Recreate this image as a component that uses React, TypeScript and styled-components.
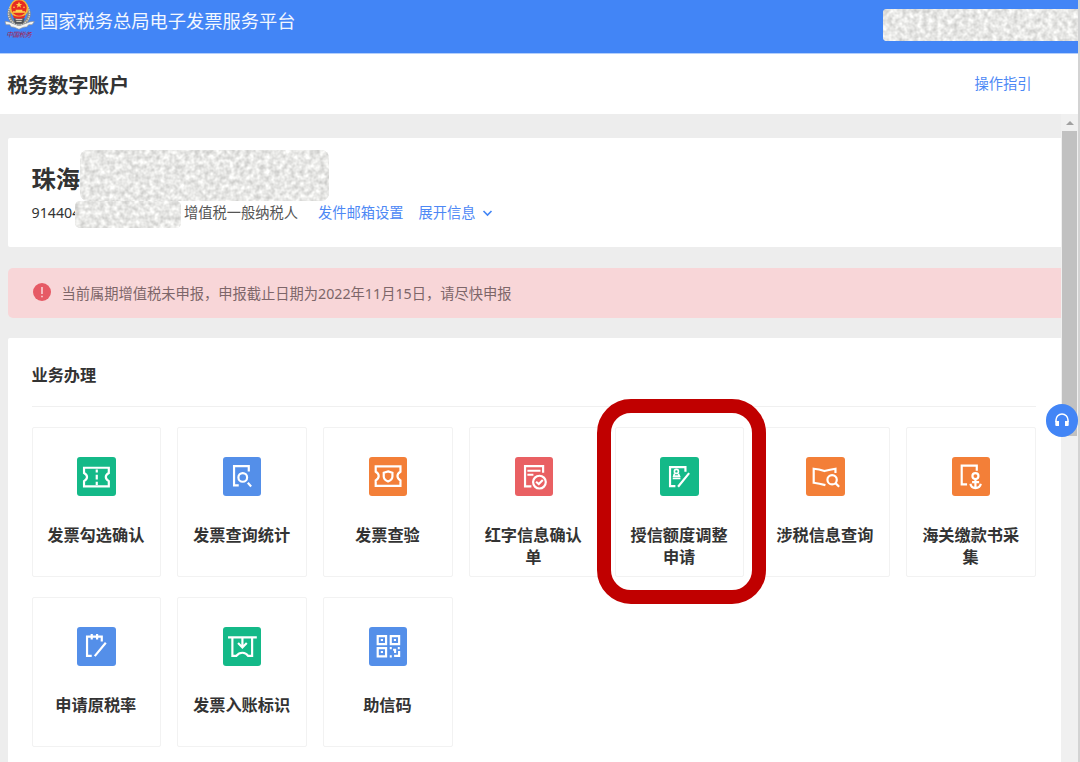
import React from 'react';
import styled, { createGlobalStyle } from 'styled-components';

const GlobalStyle = createGlobalStyle`
  * { box-sizing: border-box; }
  body {
    margin: 0;
    background: #ededed;
    color: #333;
    font-family: 'Noto Sans', 'Noto Sans CJK SC', sans-serif;
    font-size: 14.25px;
    overflow: hidden;
  }
`;

const Page = styled.div`
  display: flex;
  flex-direction: column;
  width: 1080px;
  height: 762px;
  overflow: hidden;
  border-right: 2px solid #d3d3d3;
`;

const Header = styled.header`
  display: flex;
  align-items: flex-start;
  flex: none;
  height: 54px;
  padding-left: 4px;
  background: #4285f6;
  border-bottom: 1px solid #b4cffb;
`;

const Brand = styled.h1`
  flex: 1;
  margin: 8px 0 0 4px;
  font-size: 18.25px;
  font-weight: 400;
  line-height: 26px;
  color: #f2f7ff;
  white-space: nowrap;
`;

const Redacted = styled.div<{ $w: number; $h: number; $radius: string }>`
  position: relative;
  flex: none;
  width: ${(p) => p.$w}px;
  height: ${(p) => p.$h}px;
  border-radius: ${(p) => p.$radius};
  overflow: hidden;
  background: #e8e8e6;
  svg { display: block; }
`;

const UserSlot = styled.div`
  margin: 9px -2px 0 0;
  position: relative;
`;

const TitleBar = styled.div`
  display: flex;
  justify-content: space-between;
  align-items: center;
  flex: none;
  height: 60px;
  padding: 0 46.5px 0 7.5px;
  background: #fff;
`;

const PageTitle = styled.h2`
  margin: 2px 0 0;
  font-size: 20.3px;
  line-height: 30px;
  font-weight: 700;
`;

const Link = styled.a`
  color: #4d88f5;
  line-height: 20px;
  white-space: nowrap;
`;

const Body = styled.div`
  display: flex;
  flex: 1;
  min-height: 0;
`;

const Content = styled.main`
  display: flex;
  flex-direction: column;
  width: 1061px;
  padding: 24.4px 0 0 7.5px;
  gap: 20.3px;
`;

const CompanyCard = styled.section`
  flex: none;
  height: 109px;
  padding: 11.4px 0 0 24px;
  background: #fff;
  border-radius: 2px 0 0 2px;
`;

const CompanyRow = styled.div`
  display: flex;
  height: 51px;
`;

const CompanyName = styled.strong`
  font-size: 24.3px;
  line-height: 36px;
  margin-top: 11px;
  width: 48.5px;
  white-space: nowrap;
`;

const TaxRow = styled.div`
  display: flex;
  height: 27px;
  line-height: 24px;
  white-space: nowrap;
`;

const TaxId = styled.span`
  width: 43.5px;
`;

const TaxType = styled.span`
  margin: 0 20px 0 3px;
  color: #555;
`;

const Expand = styled(Link)`
  display: flex;
  align-items: center;
  gap: 6px;
  height: 24px;
  margin-left: 15px;
  line-height: 24px;
`;

const RowLink = styled(Link)`
  line-height: 24px;
`;

const Alert = styled.section`
  display: flex;
  align-items: center;
  flex: none;
  gap: 11px;
  height: 50.5px;
  padding: 0 0 1px 25px;
  background: #f8d6d8;
  border-radius: 5px 0 0 5px;
  color: #7d6669;
  line-height: 20px;
  svg { margin-top: -1px; }
`;

const AlertText = styled.span`
  margin-top: 3px;
`;

const Panel = styled.section`
  flex: 1;
  padding: 0 25px 0 24px;
  background: #fff;
  border-radius: 2px 0 0 0;
`;

const PanelTitle = styled.h3`
  margin: 0;
  padding-top: 25px;
  height: 68.5px;
  font-size: 16.2px;
  line-height: 24px;
  border-bottom: 1px solid #f0f0f0;
`;

const Grid = styled.div`
  display: grid;
  grid-template-columns: repeat(7, 1fr);
  grid-auto-rows: 150px;
  gap: 20px 16.2px;
  margin-top: 20px;
`;

const Card = styled.div`
  position: relative;
  display: flex;
  flex-direction: column;
  align-items: center;
  padding: 29.4px 14px 0;
  border: 1px solid #f2f2f2;
  border-radius: 2px;
`;

const IconTile = styled.div<{ $color: string }>`
  width: 38.5px;
  height: 38.5px;
  border-radius: 3px;
  background: ${(p) => p.$color};
  svg { display: block; }
`;

const CardLabel = styled.div`
  margin-top: 28.1px;
  margin-left: -1px;
  font-size: 16.2px;
  font-weight: 700;
  line-height: 22.5px;
  text-align: center;
  white-space: pre;
`;

const Highlight = styled.div`
  position: absolute;
  z-index: 1;
  top: -29px;
  right: -22.5px;
  bottom: -28px;
  left: -19px;
  border: 14.5px solid #c00000;
  border-radius: 34px;
`;

const Scrollbar = styled.div`
  width: 17px;
  padding: 7px 1px 0;
  background: #f0f0f0;
`;

const ScrollArrow = styled.div`
  width: 0;
  margin: 0 auto 6px;
  border: 4px solid transparent;
  border-top-width: 0;
  border-bottom: 4px solid #a0a0a0;
`;

const ScrollThumb = styled.div`
  height: 305px;
  background: #c1c1c1;
`;

const Support = styled.button`
  position: absolute;
  z-index: 2;
  top: 404px;
  left: 1045.5px;
  display: flex;
  align-items: center;
  justify-content: center;
  width: 32.5px;
  height: 32.5px;
  padding: 0;
  border: 0;
  border-radius: 50%;
  background: #4285f6;
`;

const GREEN = '#14b988';
const BLUE = '#548fe9';
const ORANGE = '#f37f38';
const RED = '#e96063';

const Noise = ({ id, w, h, seed }: { id: string; w: number; h: number; seed: number }) => (
  <svg width={w} height={h}>
    <filter id={id} x="0" y="0" width="100%" height="100%" colorInterpolationFilters="sRGB">
      <feTurbulence type="fractalNoise" baseFrequency="0.2" numOctaves={2} seed={seed} />
      <feColorMatrix values="0 0 0 0.32 0.75  0 0 0 0.32 0.75  0 0 0 0.32 0.742  0 0 0 0 1" />
    </filter>
    <rect width={w} height={h} filter={`url(#${id})`} />
  </svg>
);

const Emblem = () => (
  <svg width="32" height="42" viewBox="12 0 96 126">
    <path d="M33 22C20 45 32 72 57 74C84 72 94 45 81 22" fill="none" stroke="#8b8b86" strokeWidth="10" />
    <path d="M31 20C18 44 29 70 57 76C86 70 96 44 83 20" fill="none" stroke="#dedbd0" strokeWidth="4" strokeDasharray="4 3" />
    <path d="M15 65C26 62 40 73 57 77C75 73 90 62 103 65L96 74H86L80 81C70 80 65 84 57 88C48 84 42 80 34 81L29 74H18Z" fill="#f4f4f1" stroke="#8d9095" strokeWidth="2" />
    <path d="M40 55H74L70 71H45Z" fill="#53565a" />
    <path d="M47 58H67M49 64H65" stroke="#e8e3d2" strokeWidth="3" />
    <circle cx="57" cy="25" r="28" fill="#f5b93a" />
    <circle cx="57" cy="24" r="23" fill="#e72b22" />
    <path d="M57 5L60 12H67L61 16L63 23L57 19L51 23L53 16L47 12H54Z" fill="#ffd34a" />
    <path d="M39 38H75V34H67V29H47V34H39Z" fill="#ffd34a" />
    <circle cx="42" cy="22" r="2.5" fill="#ffd34a" />
    <circle cx="72" cy="22" r="2.5" fill="#ffd34a" />
    <path d="M38 45C50 51 64 51 76 45L73 53C63 57 51 57 41 53Z" fill="#e72b22" />
    <text x="19" y="112" fontSize="20" fontStyle="italic" fontWeight="400" fill="#a8204a" textLength="76">中国税务</text>
  </svg>
);

const glyphs: Record<string, React.ReactNode> = {
  ticket: (
    <>
      <path d="M21 32H95V48C88 52 86 56 86 60S88 68 95 72V88H21V72C28 68 30 64 30 60S28 52 21 48Z" />
      <path d="M59 37V46M59 53V67M59 74V84" />
    </>
  ),
  docSearch: (
    <>
      <path d="M77 43V27H33V85H47" />
      <circle cx="59" cy="61" r="13" />
      <path d="M74 77L84 88" />
    </>
  ),
  ticketShield: (
    <>
      <path d="M20 28H94V44C87 48 85 52 85 57S87 66 94 70V86H20V70C27 66 29 62 29 57S27 48 20 44Z" />
      <path d="M57 43L70 47V58C70 66 64 70 57 73C50 70 44 66 44 58V47Z" />
    </>
  ),
  docCheck: (
    <>
      <path d="M84 47V27H30V88H49M37 41H76M37 53H55" />
      <circle cx="73" cy="75" r="19" />
      <path d="M63 74L71 81L83 69" />
    </>
  ),
  credit: (
    <>
      <path d="M76 44V30H30V87H46M87 48L54 89" />
      <circle cx="49" cy="43" r="6" strokeWidth="5" />
      <path d="M43 50L41 57H58L55 50M38 64H61" strokeWidth="5" />
    </>
  ),
  mapSearch: (
    <>
      <path d="M88 48V35Q72 37 55 42Q39 36 23 35V77Q40 79 58 84" />
      <circle cx="78" cy="68" r="14" />
      <path d="M88 78L99 89" />
    </>
  ),
  anchor: (
    <>
      <path d="M74 41V26H29V82H45" />
      <circle cx="70" cy="57" r="9" />
      <path d="M70 66V92M60 75H81M55 80Q57 92 70 93Q84 92 86 80" />
    </>
  ),
  notepad: <path d="M74 43V29H30V86H44M44 21V37M60 21V37M86 47L53 87" />,
  receive: <path d="M15 31H101M28 31V86H40Q47 77 58 77Q69 77 75 86H87V31M58 32V60M45 48L58 61L71 48" />,
  qr: (
    <>
      <path d="M26 27H51V51H26ZM65 27H90V51H65ZM26 63H51V88H26Z" />
      <path d="M38.5 36V42M77.5 36V42M38.5 72V78M62 63H68M62 88H68M72 68H78V78M86 63H92M75 86H90V72" strokeLinecap="butt" />
    </>
  ),
};

const services = [
  { label: '发票勾选确认', icon: 'ticket', color: GREEN },
  { label: '发票查询统计', icon: 'docSearch', color: BLUE },
  { label: '发票查验', icon: 'ticketShield', color: ORANGE },
  { label: '红字信息确认\n单', icon: 'docCheck', color: RED },
  { label: '授信额度调整\n申请', icon: 'credit', color: GREEN, highlighted: true },
  { label: '涉税信息查询', icon: 'mapSearch', color: ORANGE },
  { label: '海关缴款书采\n集', icon: 'anchor', color: ORANGE },
  { label: '申请原税率', icon: 'notepad', color: BLUE },
  { label: '发票入账标识', icon: 'receive', color: GREEN },
  { label: '助信码', icon: 'qr', color: BLUE },
];

export default function App() {
  return (
    <Page>
      <GlobalStyle />
      <Header>
        <Emblem />
        <Brand>国家税务总局电子发票服务平台</Brand>
        <UserSlot>
          <Redacted $w={197} $h={32} $radius="4px 0 0 4px">
            <Noise id="noise-user" w={197} h={32} seed={4} />
          </Redacted>
        </UserSlot>
      </Header>
      <TitleBar>
        <PageTitle>税务数字账户</PageTitle>
        <Link>操作指引</Link>
      </TitleBar>
      <Body>
        <Content>
          <CompanyCard>
            <CompanyRow>
              <CompanyName>珠海</CompanyName>
              <Redacted $w={249} $h={51} $radius="8px">
                <Noise id="noise-name" w={249} h={51} seed={7} />
              </Redacted>
            </CompanyRow>
            <TaxRow>
              <TaxId>914404</TaxId>
              <Redacted $w={106} $h={27} $radius="5px">
                <Noise id="noise-tax" w={106} h={27} seed={11} />
              </Redacted>
              <TaxType>增值税一般纳税人</TaxType>
              <RowLink>发件邮箱设置</RowLink>
              <Expand>
                展开信息
                <svg width="11" height="8" viewBox="0 0 11 8" fill="none" stroke="#4285f6" strokeWidth="1.6">
                  <path d="M1.5 2L5.5 6L9.5 2" />
                </svg>
              </Expand>
            </TaxRow>
          </CompanyCard>
          <Alert>
            <svg width="18" height="18" viewBox="0 0 18 18">
              <circle cx="9" cy="9" r="9" fill="#e65a65" />
              <path d="M9 4V11M9 12.7V14.2" stroke="#fbd9db" strokeWidth="1.5" />
            </svg>
            <AlertText>当前属期增值税未申报，申报截止日期为2022年11月15日，请尽快申报</AlertText>
          </Alert>
          <Panel>
            <PanelTitle>业务办理</PanelTitle>
            <Grid>
              {services.map((s) => (
                <Card key={s.label}>
                  <IconTile $color={s.color}>
                    <svg width="38.5" height="38.5" viewBox="0 0 115 115" fill="none" stroke="#fff" strokeWidth="6.5">
                      {glyphs[s.icon]}
                    </svg>
                  </IconTile>
                  <CardLabel>{s.label}</CardLabel>
                  {s.highlighted && <Highlight />}
                </Card>
              ))}
            </Grid>
          </Panel>
        </Content>
        <Scrollbar>
          <ScrollArrow />
          <ScrollThumb />
        </Scrollbar>
      </Body>
      <Support aria-label="客服">
        <svg width="16" height="16" viewBox="0 0 16 16" fill="none" stroke="#fff" strokeWidth="1.5">
          <path d="M2 10V8A6 6 0 0 1 14 8V10" />
          <path d="M1.3 9H5V14H2.3Q1.3 14 1.3 13ZM14.7 9H11V14H13.7Q14.7 14 14.7 13Z" fill="#fff" stroke="none" />
        </svg>
      </Support>
    </Page>
  );
}
